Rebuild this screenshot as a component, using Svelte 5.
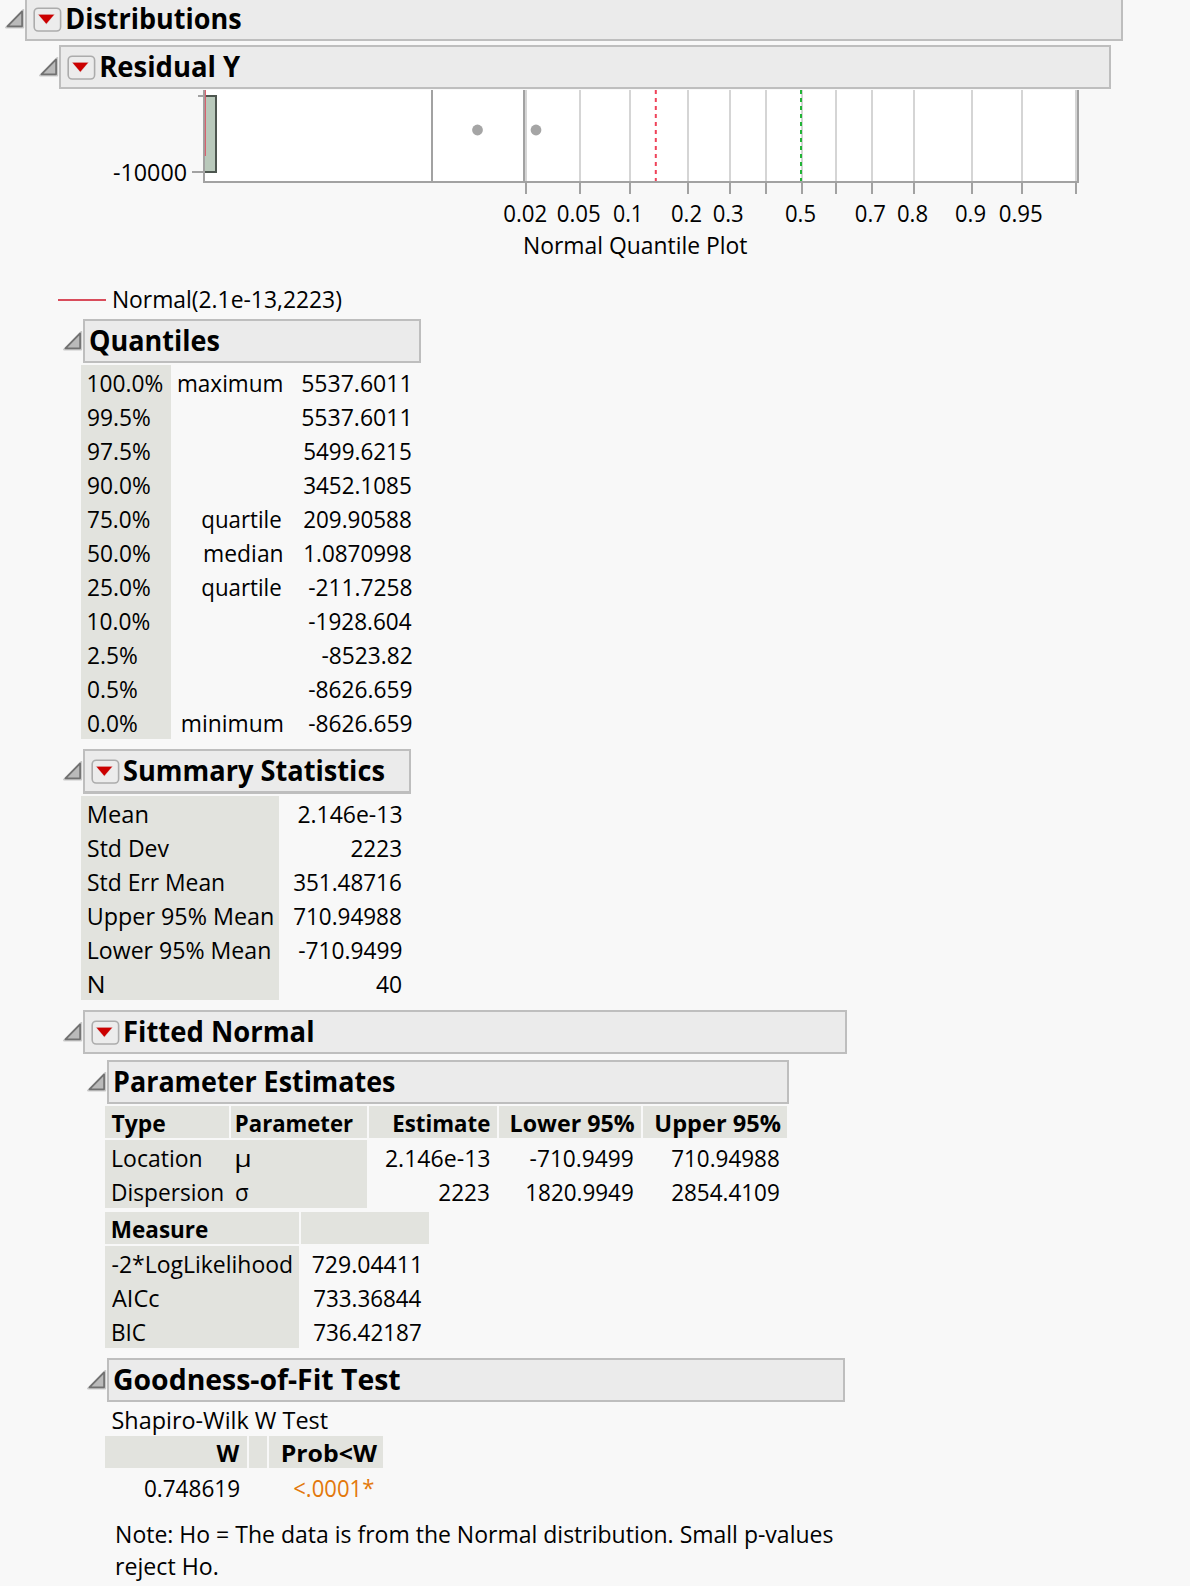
<script>
  // Each text entry is [string, drawn width in px, optional horizontal nudge in px].
  const quantiles = [
    [['100.0%', 74, 0.5], ['maximum', 103.5], ['5537.6011', 106, -3]],
    [['99.5%', 62], null, ['5537.6011', 106, -3]],
    [['97.5%', 62], null, ['5499.6215', 107]],
    [['90.0%', 62], null, ['3452.1085', 107]],
    [['75.0%', 61.5], ['quartile', 79, -0.5], ['209.90588', 107]],
    [['50.0%', 62], ['median', 77, -0.5], ['1.0870998', 106]],
    [['25.0%', 62], ['quartile', 79, -0.5], ['-211.7258', 103.5, 0.7]],
    [['10.0%', 61, 0.5], null, ['-1928.604', 103.5, 0.7]],
    [['2.5%', 49], null, ['-8523.82', 90.5, 0.7]],
    [['0.5%', 49], null, ['-8626.659', 103.5, 0.7]],
    [['0.0%', 49], ['minimum', 100, 0.5], ['-8626.659', 103.5, 0.7]]
  ];

  const summary = [
    [['Mean', 58.5, 0.7], ['2.146e-13', 103.5]],
    [['Std Dev', 81], ['2223', 50, -0.5]],
    [['Std Err Mean', 135.5], ['351.48716', 107]],
    [['Upper 95% Mean', 184, 0.7], ['710.94988', 107]],
    [['Lower 95% Mean', 181, 0.7], ['-710.9499', 103.5, 0.7]],
    [['N', 14.5, 0.7], ['40', 25.5]]
  ];

  const estimateHeads = [['Type', 54, -0.5], ['Parameter', 116.5, 0.7], ['Estimate', 96, 0.4], ['Lower 95%', 122.5, 0.7], ['Upper 95%', 124, 0.4]];
  const estimates = [
    [['Location', 88, 1], ['μ', 13, 0.5], ['2.146e-13', 104], ['-710.9499', 103.5], ['710.94988', 107]],
    [['Dispersion', 109.5, 1], ['σ', 13], ['2223', 50, -0.7], ['1820.9949', 106], ['2854.4109', 107]]
  ];

  const measures = [
    [['-2*LogLikelihood', 180, -0.5], ['729.04411', 106, -2.5]],
    [['AICc', 47], ['733.36844', 107.5, 0.5]],
    [['BIC', 33, 0.8], ['736.42187', 107]]
  ];

  const gridX = [526, 580, 630, 688, 730, 766, 802, 836, 872, 914, 972, 1022, 1076];
  const ticks = [
    ['0.02', 503.3, 44], ['0.05', 556.8, 44], ['0.1', 613, 30], ['0.2', 671, 31], ['0.3', 712.7, 31],
    ['0.5', 785, 31], ['0.7', 854.8, 31], ['0.8', 897, 31], ['0.9', 955, 31], ['0.95', 998.8, 44]
  ];

  // Condenses a label so that its drawn glyphs span exactly the given width.
  function fit(node, [width, nudge = 0]) {
    const style = getComputedStyle(node);
    const ctx = document.createElement('canvas').getContext('2d');
    ctx.font = `${style.fontWeight} ${style.fontSize} ${style.fontFamily}`;
    const m = ctx.measureText(node.textContent);
    const s = width / (m.actualBoundingBoxLeft + m.actualBoundingBoxRight);
    const right = style.textAlign === 'right';
    const shift = nudge + (right ? (m.width - m.actualBoundingBoxRight) * s : m.actualBoundingBoxLeft * s);
    node.style.transformOrigin = right ? '100% 50%' : '0 50%';
    node.style.transform = `translateX(${shift}px) scaleX(${s})`;
  }
</script>

{#snippet txt(t)}{#if t}<span class="t" use:fit={t.slice(1)}>{t[0]}</span>{/if}{/snippet}

{#snippet head(title, size, width, menu, nudge = 0)}
  <div class="head {size}">
    <svg class="disclose" width="20" height="20" viewBox="0 0 20 20">
      <path d="M0.8 18.6 L18.4 0.6 V18.6 Z" fill="none" stroke="#c9c9c9" stroke-width="1.6" stroke-linejoin="round" />
      <path d="M2.4 17.3 L17.1 2.4 V17.3 Z" fill="#bababa" stroke="#707070" stroke-width="1.7" stroke-linejoin="round" />
    </svg>
    <div class="bar" class:menu>
      {#if menu}
        <svg class="hotspot" width="29" height="26" viewBox="0 0 29 26">
          <rect x="1.2" y="1.2" width="26.4" height="22.8" rx="4" fill="#ececec" stroke="#acacac" stroke-width="1.6" />
          <path d="M4.6 7 H22 L13.4 17.6 Z" fill="#d99a9a" opacity=".6" />
          <path d="M5.6 7.7 H21 L13.3 16.7 Z" fill="#cb0000" />
        </svg>
      {/if}
      <h2>{@render txt([title, width, nudge])}</h2>
    </div>
  </div>
{/snippet}

<main>
  {@render head('Distributions', 'w-root', 173.5, true, 1.2)}
  <section class="level1">
    {@render head('Residual Y', 'w-residual', 139.5, true, 1.2)}
  </section>

  <svg class="chart" width="1190" height="175" viewBox="0 89 1190 175">
    <rect x="204" y="90" width="874" height="92" fill="#fff" />
    <rect x="204" y="96" width="12" height="76" fill="#b9c9bb" stroke="#4d564f" stroke-width="2" />
    <path d="M198 96 H203 M192 172 H203" stroke="#a2a2a2" stroke-width="2" />
    <path d="M204 90 V183" stroke="#a2a2a2" stroke-width="2" />
    <path d="M205.4 90 V156" stroke="#d95c6b" stroke-width="1.1" />
    {#each gridX as x}
      <path d="M{x} 90 V181" stroke="#d5d5d5" stroke-width="2" />
      <path d="M{x} 183 V194" stroke="#a2a2a2" stroke-width="2" />
    {/each}
    <path d="M432 90 V181 M524 90 V181 M1078 90 V183 M203 182 H1079" stroke="#a2a2a2" stroke-width="2" />
    <path d="M655.8 90 V181" stroke="#ef4259" stroke-width="2" stroke-dasharray="4 4" />
    <path d="M801 90 V181" stroke="#21b436" stroke-width="2" stroke-dasharray="4 4" />
    <circle cx="477.5" cy="130" r="5.4" fill="#a5a5a5" />
    <circle cx="536" cy="130" r="5.4" fill="#a5a5a5" />
    <text x="113" y="181" textLength="74" lengthAdjust="spacingAndGlyphs">-10000</text>
    {#each ticks as [label, x, w]}
      <text {x} y="222" textLength={w} lengthAdjust="spacingAndGlyphs">{label}</text>
    {/each}
    <text x="523" y="254" textLength="224.5" lengthAdjust="spacingAndGlyphs">Normal Quantile Plot</text>
  </svg>

  <div class="legend">
    <i></i>{@render txt(['Normal(2.1e-13,2223)', 228, 0.8])}
  </div>

  <section class="level2">
    {@render head('Quantiles', 'w-quantiles', 129, false)}
    <div class="table q">
      {#each quantiles as row}
        <div class="c key">{@render txt(row[0])}</div>
        <div class="c num">{@render txt(row[1])}</div>
        <div class="c num">{@render txt(row[2])}</div>
      {/each}
    </div>
  </section>

  <section class="level2 gap">
    {@render head('Summary Statistics', 'w-summary', 260, true)}
    <div class="table s">
      {#each summary as row}
        <div class="c key">{@render txt(row[0])}</div>
        <div class="c num">{@render txt(row[1])}</div>
      {/each}
    </div>
  </section>

  <section class="level2 gap">
    {@render head('Fitted Normal', 'w-fitted', 188, true, 1)}
  </section>

  <section class="level3 small-gap">
    {@render head('Parameter Estimates', 'w-params', 279.5, false, 1)}
    <div class="table heads p">
      {#each estimateHeads as h, i}
        <div class="h" class:num={i > 1}>{@render txt(h)}</div>
      {/each}
    </div>
    <div class="table rows p">
      {#each estimates as row}
        {#each row as cell, i}
          <div class="c" class:key={i < 2} class:join={i === 0} class:num={i > 1}>{@render txt(cell)}</div>
        {/each}
      {/each}
    </div>
    <div class="table heads m">
      <div class="h">{@render txt(['Measure', 95.5, 0.7])}</div>
      <div class="h"></div>
    </div>
    <div class="table rows m">
      {#each measures as row}
        <div class="c key">{@render txt(row[0])}</div>
        <div class="c num">{@render txt(row[1])}</div>
      {/each}
    </div>
  </section>

  <section class="level3 gap">
    {@render head('Goodness-of-Fit Test', 'w-goodness', 286.5, false)}
    <div class="caption">{@render txt(['Shapiro-Wilk W Test', 215, -0.5])}</div>
    <div class="table heads g">
      <div class="h num">{@render txt(['W', 23.5, 0.7])}</div>
      <div class="h"></div>
      <div class="h num">{@render txt(['Prob<W', 95, 0.8])}</div>
    </div>
    <div class="table rows g">
      <div class="c num">{@render txt(['0.748619', 94.5])}</div>
      <div class="c"></div>
      <div class="c num alert">{@render txt(['<.0001*', 80])}</div>
    </div>
    <div class="note">
      <p>{@render txt(['Note: Ho = The data is from the Normal distribution. Small p-values', 716])}</p>
      <p>{@render txt(['reject Ho.', 100.5])}</p>
    </div>
  </section>
</main>

<style>
  :global(body) {
    background: #f8f8f8;
    overflow: hidden;
  }
  main {
    display: flex;
    flex-direction: column;
    width: 1190px;
    height: 1586px;
    overflow: hidden;
    box-sizing: border-box;
    color: #000;
    font: 24px/35px 'Open Sans', 'Noto Sans', sans-serif;
  }
  section {
    display: flex;
    flex-direction: column;
  }
  .t {
    display: inline-block;
    white-space: pre;
  }

  .head {
    display: flex;
    flex: none;
    height: 44px;
  }
  .disclose {
    flex: none;
    margin-top: 12px;
  }
  .bar {
    display: flex;
    flex: 1;
    box-sizing: border-box;
    border: 2px solid #bebebe;
    background: #ebebeb;
    padding-left: 5px;
  }
  .bar.menu {
    padding-left: 6px;
  }
  .hotspot {
    flex: none;
    margin-top: 8px;
    margin-right: 4px;
  }
  h2 {
    margin: 0;
    font-size: 28px;
    line-height: 38px;
    font-weight: 700;
  }
  .w-root { width: 1118px; margin: -3px 0 0 5px; }
  .w-residual { width: 1072px; }
  .w-quantiles { width: 358px; }
  .w-summary { width: 348px; height: 45px; }
  .w-summary .bar { border-bottom-width: 3px; }
  .w-fitted { width: 784px; }
  .w-params { width: 702px; }
  .w-goodness { width: 758px; }

  .level1 { margin: 4px 0 0 39px; }
  .level2 { margin-left: 63px; }
  .level3 { margin-left: 87px; }
  .gap { margin-top: 10px; }
  .small-gap { margin-top: 6px; }

  .chart {
    display: block;
    flex: none;
  }
  .legend {
    display: flex;
    align-items: flex-start;
    gap: 6.5px;
    height: 34px;
    margin: 17px 0 4px 58px;
  }
  .legend i {
    width: 48px;
    height: 2px;
    margin-top: 18px;
    background: #d94c5b;
  }

  .table {
    display: grid;
    grid-auto-rows: 34px;
    margin: 2px 0 0 18px;
  }
  .q { grid-template-columns: 90px 118px 123px; }
  .q .c:nth-child(3n + 2) { padding-right: 7px; }
  .q .c:nth-child(3n) { padding-right: 0.5px; }
  .s { grid-template-columns: 198px 122.5px; }
  .s .num { padding-right: 0; }
  .p { grid-template-columns: 124px 136px 128px 142px 144px; }
  .m { grid-template-columns: 194px 128px; }
  .g { grid-template-columns: 142px 18px 114px; }
  .heads, .rows { column-gap: 2px; }
  .heads { grid-auto-rows: 32px; }
  .rows + .heads { margin-top: 4px; }
  .heads.g { margin-top: 0; }

  .c, .h {
    box-sizing: border-box;
    padding-left: 7px;
    white-space: nowrap;
  }
  .key, .h {
    background: #e2e3de;
  }
  .join {
    margin-right: -2px;
  }
  .p > :nth-child(5n + 2) {
    padding-left: 5px;
  }
  .h {
    line-height: 34px;
    font-weight: 700;
  }
  .num {
    display: flex;
    justify-content: flex-end;
    padding: 0 7.5px 0 0;
    text-align: right;
  }
  .g .num:last-child { padding-right: 6px; }
  .g .alert:last-child { color: #e3780c; padding-right: 9px; }
  .caption {
    height: 34px;
    padding-left: 25.5px;
  }
  .note {
    margin: 14px 0 0 29.5px;
    line-height: 32px;
  }
  .note p { margin: 0; height: 32px; }
</style>
